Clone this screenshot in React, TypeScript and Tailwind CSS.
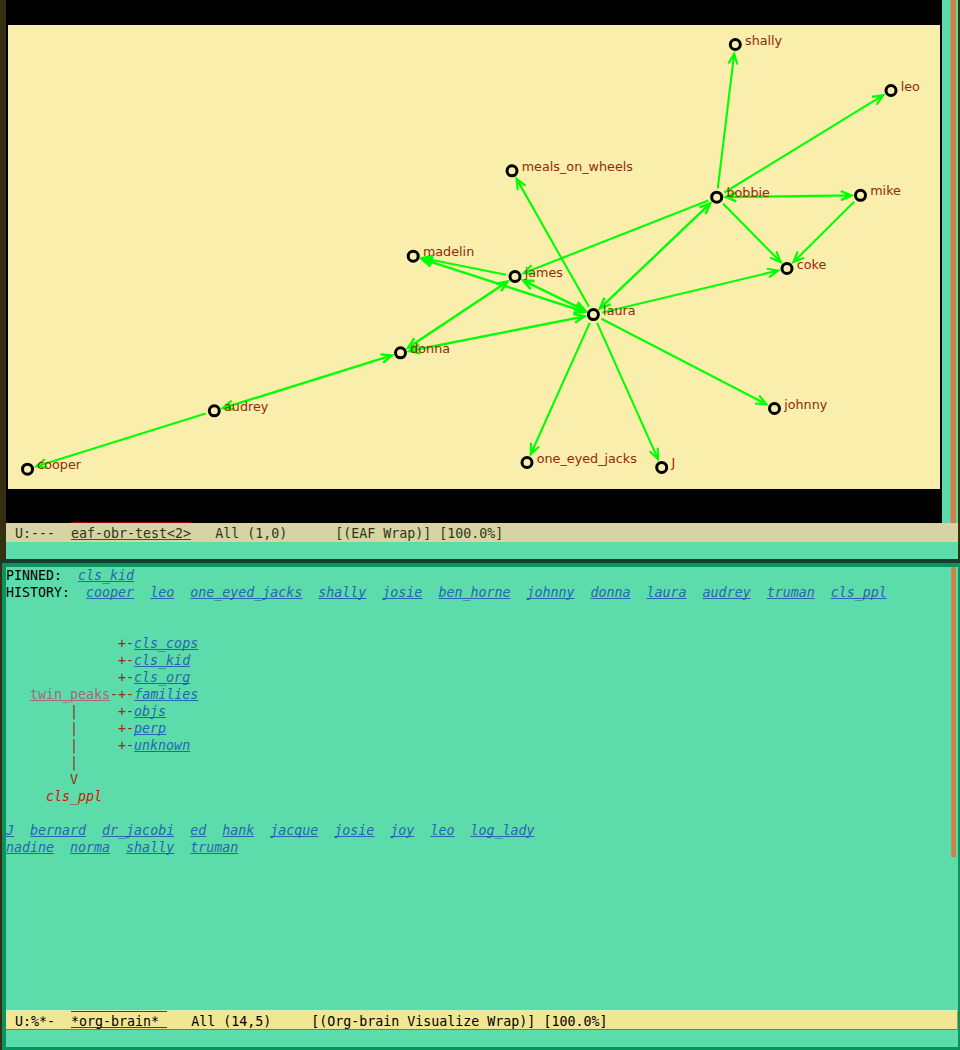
import React from "react";

type Point = { x: number; y: number };

const nodes: Record<string, Point> = {
  shally: { x: 735.3, y: 44.5 },
  leo: { x: 891, y: 90.5 },
  meals_on_wheels: { x: 512, y: 170.8 },
  bobbie: { x: 716.7, y: 197.2 },
  mike: { x: 860.5, y: 195.3 },
  madelin: { x: 413.2, y: 256.2 },
  coke: { x: 787, y: 268.5 },
  james: { x: 515, y: 276.5 },
  laura: { x: 593.4, y: 314.6 },
  donna: { x: 400.5, y: 352.8 },
  audrey: { x: 214.3, y: 410.8 },
  johnny: { x: 774.5, y: 408.5 },
  one_eyed_jacks: { x: 527, y: 462.5 },
  J: { x: 661.7, y: 467.4 },
  cooper: { x: 27.5, y: 469.2 },
};

const edges: [string, string, boolean][] = [
  ["bobbie", "shally", false],
  ["bobbie", "leo", false],
  ["bobbie", "mike", true],
  ["bobbie", "coke", false],
  ["mike", "coke", false],
  ["bobbie", "james", false],
  ["bobbie", "laura", true],
  ["laura", "meals_on_wheels", false],
  ["james", "madelin", false],
  ["laura", "madelin", true],
  ["james", "laura", true],
  ["james", "donna", true],
  ["donna", "laura", true],
  ["laura", "coke", false],
  ["laura", "johnny", false],
  ["laura", "one_eyed_jacks", false],
  ["laura", "J", false],
  ["donna", "audrey", true],
  ["audrey", "cooper", false],
];

function head(tip: Point, angle: number) {
  const arm = (o: number) =>
    `${tip.x - 11.5 * Math.cos(angle + o)} ${tip.y - 11.5 * Math.sin(angle + o)}`;
  return `M${arm(0.4)} L${tip.x} ${tip.y} L${arm(-0.4)}`;
}

function Edge({ from, to, both }: { from: Point; to: Point; both: boolean }) {
  const a = Math.atan2(to.y - from.y, to.x - from.x);
  const s = { x: from.x + 9 * Math.cos(a), y: from.y + 9 * Math.sin(a) };
  const e = { x: to.x - 9 * Math.cos(a), y: to.y - 9 * Math.sin(a) };
  return (
    <path
      d={`M${s.x} ${s.y} L${e.x} ${e.y} ${head(e, a)} ${both ? head(s, a + Math.PI) : ""}`}
      fill="none"
      stroke="#00ff00"
      strokeWidth={both ? 2.4 : 2.1}
    />
  );
}

function Graph() {
  return (
    <svg className="block h-[464px] w-[932px] bg-[#f9eeac]" viewBox="8 25 932 464">
      {edges.map(([a, b, both]) => (
        <Edge key={a + b} from={nodes[a]} to={nodes[b]} both={both} />
      ))}
      {Object.entries(nodes).map(([name, p]) => (
        <g key={name}>
          <circle cx={p.x} cy={p.y} r={5} fill="#f9eeac" stroke="#000" strokeWidth={3} />
          <text
            x={p.x + 9.7}
            y={Math.round(p.y)}
            fill="#96280a"
            className="font-['DejaVu_Sans'] text-[12.75px]"
          >
            {name}
          </text>
        </g>
      ))}
    </svg>
  );
}

function Link({ children }: { children: string }) {
  return (
    <span className="text-[#2865b0] italic underline decoration-1 underline-offset-1 [text-decoration-skip-ink:none]">
      {children}
    </span>
  );
}

function LinkRow({ items }: { items: string[] }) {
  return (
    <>
      {items.map((item, i) => (
        <React.Fragment key={item}>
          {i > 0 && "  "}
          <Link>{item}</Link>
        </React.Fragment>
      ))}
    </>
  );
}

const children = ["cls_cops", "cls_kid", "cls_org", "families", "objs", "perp", "unknown"];
const stems = ["", "", "", "", "|", "|", "|"];

function Brain() {
  return (
    <div className="h-[443px] grow overflow-hidden whitespace-pre leading-[17px]">
      <div>PINNED:  <Link>cls_kid</Link></div>
      <div>
        {"HISTORY:  "}
        <LinkRow
          items={["cooper", "leo", "one_eyed_jacks", "shally", "josie", "ben_horne", "johnny", "donna", "laura", "audrey", "truman", "cls_ppl"]}
        />
      </div>
      <div className="h-[34px]" />
      <div className="text-[#9a2a10]">
        {children.map((name, i) => (
          <div key={name}>
            {i === 3 ? (
              <>
                {"   "}
                <span className="text-[#a5687c] underline decoration-1 underline-offset-1 [text-decoration-skip-ink:none]">
                  twin_peaks
                </span>
                {"-"}
              </>
            ) : (
              ("        " + stems[i]).padEnd(14)
            )}
            {"+-"}
            <Link>{name}</Link>
          </div>
        ))}
        <div>{"        |"}</div>
        <div>{"        V"}</div>
        <div className="text-[#d01800] italic">{"     cls_ppl"}</div>
      </div>
      <div className="h-[17px]" />
      <div>
        <LinkRow items={["J", "bernard", "dr_jacobi", "ed", "hank", "jacque", "josie", "joy", "leo", "log_lady"]} />
      </div>
      <div>
        <LinkRow items={["nadine", "norma", "shally", "truman"]} />
      </div>
    </div>
  );
}

export default function App() {
  return (
    <div className="flex h-[1050px] w-[960px] flex-col overflow-hidden bg-[#35300f] font-['DejaVu_Sans_Mono',monospace] text-[13.3px] text-black">
      <div className="ml-[6px] mr-[2px] flex h-[559px] flex-col">
        <div className="flex h-[523px]">
          <div className="w-[936px] bg-black pl-[2px] pt-[25px]">
            <Graph />
          </div>
          <div className="flex w-4 bg-[#5cdcaa] pl-2">
            <div className="w-px bg-[#9aa58a]" />
            <div className="w-[5px] bg-[#cf8145]" />
          </div>
        </div>
        <div className="h-[19px] whitespace-pre bg-[#d8d3a4] pl-px leading-[21px] text-[#333318]">
          {" U:---  "}
          <span className="inline-block h-[17px] border-b border-[#c01818] align-top shadow-[0_-1px_0_#a00000]">
            eaf-obr-test&lt;2&gt;
          </span>
          {"   All (1,0)      [(EAF Wrap)] [100.0%]"}
        </div>
        <div className="h-[17px] bg-[#5cdcaa]" />
      </div>
      <div className="h-1 bg-[#153c2c]" />
      <div className="ml-[2px] h-[487px] border-b-[3px] border-l-4 border-r-2 border-t-4 border-[#07945f] bg-[#5cdcaa]">
        <div className="flex h-[443px]">
          <Brain />
          <div className="mr-[2px] flex h-[290px]">
            <div className="w-px bg-[#b89063]" />
            <div className="w-[4px] bg-[#cf8145]" />
          </div>
        </div>
        <div className="h-5 whitespace-pre border-b border-r border-t border-b-[#7c794c] border-r-[#a99d5c] border-t-[#d8eebc] bg-[#f2e694] pl-px leading-[21px]">
          {" U:%*-  "}
          <span className="inline-block h-[17px] border-b border-t border-b-[#a02000] border-t-[#a02000] align-top leading-[19px]">
            {"*org-brain* "}
          </span>
          {"   All (14,5)     [(Org-brain Visualize Wrap)] [100.0%]"}
        </div>
      </div>
    </div>
  );
}
